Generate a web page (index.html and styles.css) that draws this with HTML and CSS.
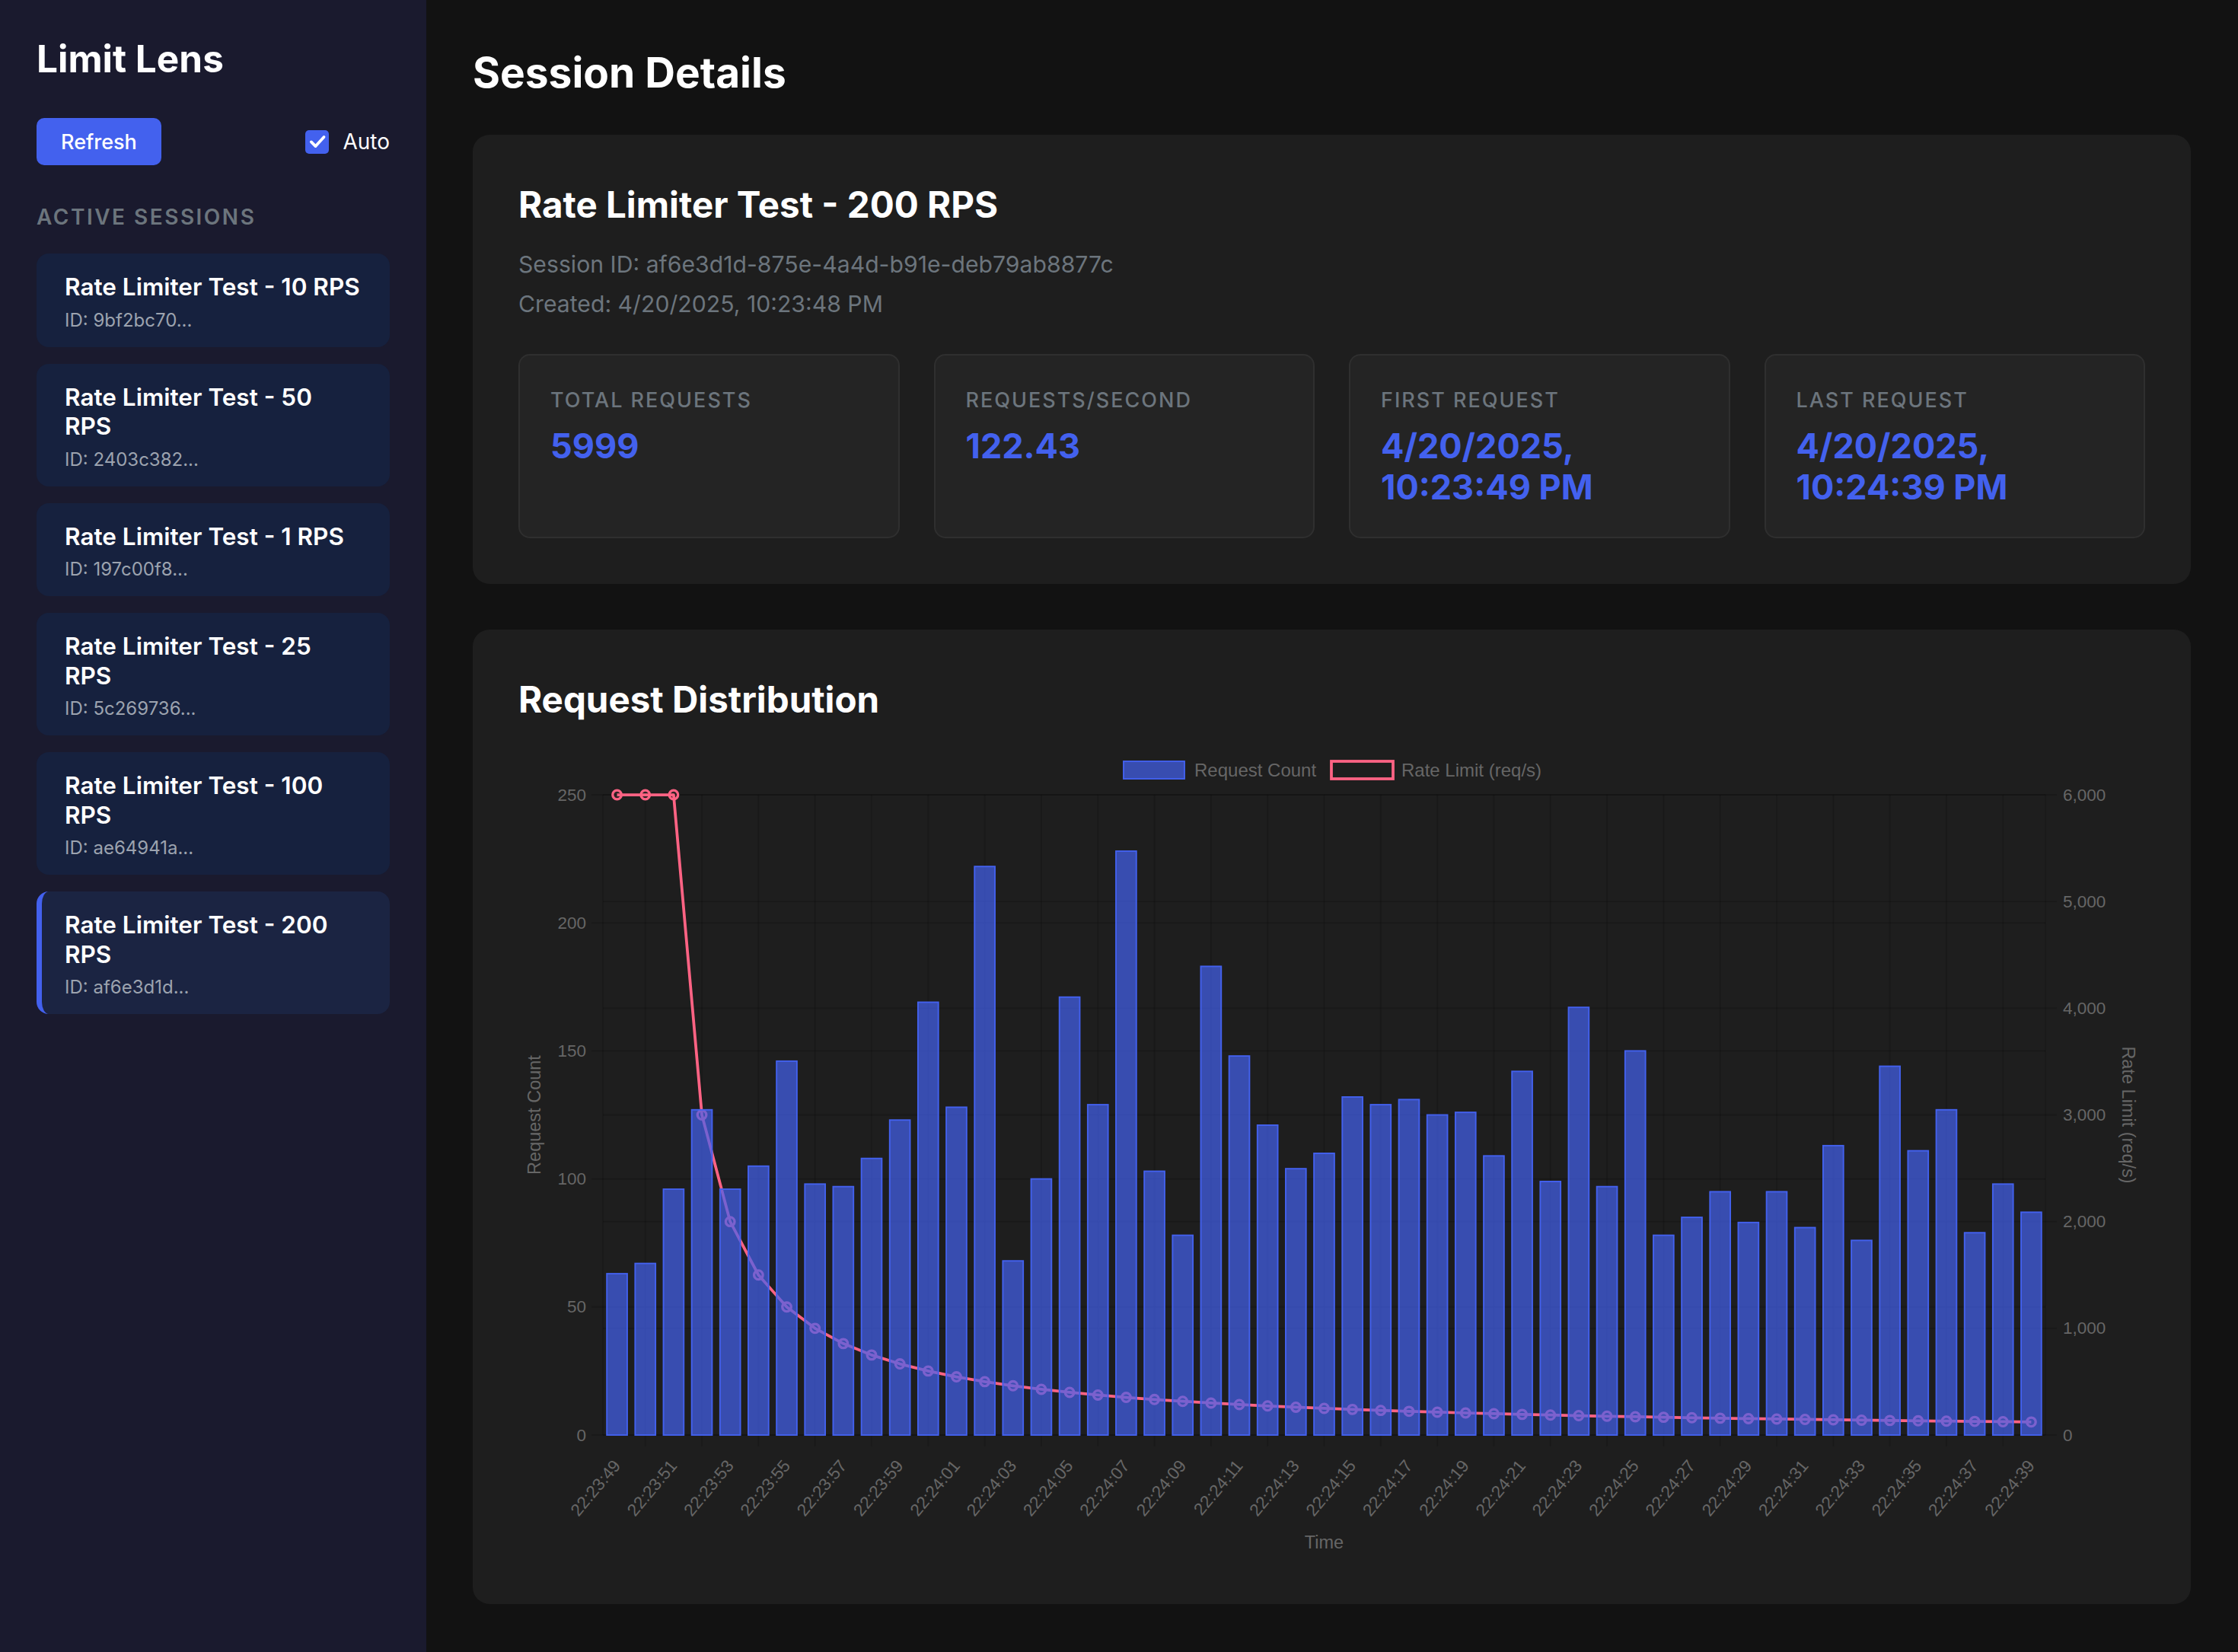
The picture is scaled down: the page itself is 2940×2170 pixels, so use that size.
FILE: index.html
```html
<!DOCTYPE html>
<html lang="en">
<head>
<meta charset="utf-8">
<title>Limit Lens</title>
<link rel="stylesheet" href="styles.css">
</head>
<body>
<div class="app">
  <aside class="sidebar">
    <h1 class="brand">Limit Lens</h1>
    <div class="controls">
      <button class="btn" type="button">Refresh</button>
      <label class="auto">
        <span class="check"><svg viewBox="0 0 32 32" width="26" height="26"><path d="M6 16.5 L13 23.5 L26.5 8.5" fill="none" stroke="#fff" stroke-width="4.6" stroke-linecap="round" stroke-linejoin="round"/></svg></span>
        Auto
      </label>
    </div>
    <h3 class="section-label">Active Sessions</h3>
    <ul class="sessions">
      <li class="session"><div class="session-name">Rate Limiter Test - 10 RPS</div><div class="session-id">ID: 9bf2bc70...</div></li>
      <li class="session"><div class="session-name">Rate Limiter Test - 50 RPS</div><div class="session-id">ID: 2403c382...</div></li>
      <li class="session"><div class="session-name">Rate Limiter Test - 1 RPS</div><div class="session-id">ID: 197c00f8...</div></li>
      <li class="session"><div class="session-name">Rate Limiter Test - 25 RPS</div><div class="session-id">ID: 5c269736...</div></li>
      <li class="session"><div class="session-name">Rate Limiter Test - 100 RPS</div><div class="session-id">ID: ae64941a...</div></li>
      <li class="session active"><div class="session-name">Rate Limiter Test - 200 RPS</div><div class="session-id">ID: af6e3d1d...</div></li>
    </ul>
  </aside>
  <main class="main">
    <h1 class="page-title">Session Details</h1>
    <section class="card">
      <h2 class="card-title">Rate Limiter Test - 200 RPS</h2>
      <p class="meta">Session ID: af6e3d1d-875e-4a4d-b91e-deb79ab8877c</p>
      <p class="meta">Created: 4/20/2025, 10:23:48 PM</p>
      <div class="stats">
        <div class="stat"><div class="stat-label">Total Requests</div><div class="stat-value">5999</div></div>
        <div class="stat"><div class="stat-label">Requests/Second</div><div class="stat-value">122.43</div></div>
        <div class="stat"><div class="stat-label">First Request</div><div class="stat-value">4/20/2025, 10:23:49 PM</div></div>
        <div class="stat"><div class="stat-label">Last Request</div><div class="stat-value">4/20/2025, 10:24:39 PM</div></div>
      </div>
    </section>
    <section class="card chart-card">
      <h2 class="card-title chart-title">Request Distribution</h2>
      <svg id="chart" class="chart" viewBox="0 0 2137 1066" width="2137" height="1066"></svg>
    </section>
  </main>
</div>
<script src="script.js"></script>
</body>
</html>
```

FILE: styles.css
```css
* { box-sizing: border-box; margin: 0; padding: 0; }
html, body { height: 100%; }
body {
  background: #121212;
  color: #ffffff;
  font-family: Inter, "Noto Sans", sans-serif;
}
.app { display: flex; min-height: 100vh; }

.sidebar {
  width: 560px;
  flex: none;
  background: #1a1a2e;
  padding: 48px;
}
.brand { font-size: 49.5px; font-weight: 700; line-height: 58px; }
.controls {
  display: flex;
  align-items: center;
  justify-content: space-between;
  margin-top: 49px;
}
.btn {
  height: 62px;
  padding: 0 32px;
  background: #4361ee;
  color: #fff;
  border: none;
  border-radius: 10px;
  font-family: Inter, sans-serif;
  font-size: 27px;
  font-weight: 500;
}
.auto { display: flex; align-items: center; gap: 18px; font-size: 28px; }
.check {
  width: 31px; height: 31px;
  border-radius: 5px;
  background: #4361ee;
  display: flex; align-items: center; justify-content: center;
}
.section-label {
  margin-top: 52px;
  font-size: 28px;
  font-weight: 600;
  letter-spacing: 2.5px;
  text-transform: uppercase;
  color: #6c757d;
  line-height: 33px;
}
.sessions {
  list-style: none;
  margin-top: 31px;
  display: flex;
  flex-direction: column;
  gap: 22px;
}
.session {
  background: #16213e;
  border-radius: 16px;
  border-left: 7px solid transparent;
  padding: 25px 30px 21px;
}
.session.active { border-left-color: #4361ee; background: #1b2442; }
.session-name { font-size: 31.5px; font-weight: 600; line-height: 38.5px; max-width: 390.5px; }
.session-id { font-size: 24px; color: #9ca3af; margin-top: 9px; line-height: 29px; }

.main { flex: 1; min-width: 0; padding: 62px 62px 62px 61px; }
.page-title { font-size: 55px; font-weight: 700; line-height: 67px; margin-bottom: 48px; }
.card { background: #1e1e1e; border-radius: 22px; padding: 65px 60px 60px; }
.card + .card { margin-top: 60px; }
.card-title { font-size: 47.5px; font-weight: 700; line-height: 54px; }
.meta { color: #6c757d; font-size: 30.2px; line-height: 45px; margin-top: 7px; }
.card-title + .meta { margin-top: 29px; }
.stats {
  display: grid;
  grid-template-columns: repeat(4, 1fr);
  gap: 45px;
  margin-top: 43px;
}
.stat {
  background: #242424;
  border: 2px solid #2f2f2f;
  border-radius: 15px;
  padding: 43px 40px 38px;
}
.stat-label {
  font-size: 27px;
  font-weight: 500;
  letter-spacing: 2px;
  text-transform: uppercase;
  color: #6c757d;
  line-height: 32px;
}
.stat-value { font-size: 45px; font-weight: 700; color: #4361ee; line-height: 54px; margin-top: 17px; }
.chart-title { margin-bottom: 35px; }
.chart { display: block; width: 2137px; height: 1066px; }
.chart text { font-family: "Liberation Sans", Arial, sans-serif; font-size: 22.5px; fill: #666666; }
.chart .legend-text { font-size: 24px; }
.chart .axis-title { font-size: 23.5px; }
```

FILE: script.js
```js
(function () {
  var NS = 'http://www.w3.org/2000/svg';
  var svg = document.getElementById('chart');
  var L = 111, R = 2006, T = 63, B = 904;
  var counts = [63, 67, 96, 127, 96, 105, 146, 98, 97, 108, 123, 169, 128, 222, 68, 100, 171, 129, 228, 103,
    78, 183, 148, 121, 104, 110, 132, 129, 131, 125, 126, 109, 142, 99, 167, 97, 150, 78, 85, 95,
    83, 95, 81, 113, 76, 144, 111, 127, 79, 98, 87];
  var n = counts.length;
  var cw = (R - L) / n;
  function yL(v) { return B - v * (B - T) / 250; }
  function yR(v) { return B - v * (B - T) / 6000; }
  function cx(i) { return L + (i + 0.5) * cw; }
  function el(tag, attrs, text, parent) {
    var e = document.createElementNS(NS, tag);
    for (var k in attrs) e.setAttribute(k, attrs[k]);
    if (text !== undefined && text !== null) e.textContent = text;
    (parent || svg).appendChild(e);
    return e;
  }
  var gridColor = 'rgba(0,0,0,0.14)';
  var g = el('g', { stroke: gridColor, 'stroke-width': 1.9 });
  var v;
  for (v = 0; v <= 250; v += 50) el('line', { x1: L - 15, x2: R, y1: yL(v), y2: yL(v) }, null, g);
  for (v = 0; v <= 6000; v += 1000) el('line', { x1: L, x2: R + 15, y1: yR(v), y2: yR(v) }, null, g);
  el('line', { x1: L, x2: L, y1: T, y2: B }, null, g);
  el('line', { x1: R, x2: R, y1: T, y2: B }, null, g);
  for (var i = 1; i < n; i += 2) el('line', { x1: cx(i), x2: cx(i), y1: T, y2: B + 15 }, null, g);

  for (v = 0; v <= 250; v += 50) el('text', { x: 89, y: yL(v), 'text-anchor': 'end', 'dominant-baseline': 'central' }, String(v));
  for (v = 0; v <= 6000; v += 1000) el('text', { x: 2029, y: yR(v), 'text-anchor': 'start', 'dominant-baseline': 'central' }, v.toLocaleString('en-US'));

  function pad(x) { return (x < 10 ? '0' : '') + x; }
  for (i = 0; i < n; i += 2) {
    var s = 23 * 60 + 49 + i;
    var label = '22:' + pad(Math.floor(s / 60)) + ':' + pad(s % 60);
    var x = cx(i), y = 940;
    el('text', { x: x, y: y, 'text-anchor': 'end', 'dominant-baseline': 'central', transform: 'rotate(-50 ' + x + ' ' + y + ')' }, label);
  }
  el('text', { x: (L + R) / 2, y: 1053, 'text-anchor': 'middle', 'class': 'axis-title' }, 'Time');
  el('text', { x: 21, y: (T + B) / 2, 'text-anchor': 'middle', 'dominant-baseline': 'central', 'class': 'axis-title', transform: 'rotate(-90 21 ' + (T + B) / 2 + ')' }, 'Request Count');
  el('text', { x: 2115, y: (T + B) / 2, 'text-anchor': 'middle', 'dominant-baseline': 'central', 'class': 'axis-title', transform: 'rotate(90 2115 ' + (T + B) / 2 + ')' }, 'Rate Limit (req/s)');

  var pts = [];
  for (i = 0; i < n; i++) {
    var r = 6000 / Math.max(1, i - 1);
    pts.push([cx(i), yR(r)]);
  }
  el('polyline', { points: pts.map(function (p) { return p[0].toFixed(2) + ',' + p[1].toFixed(2); }).join(' '), fill: 'none', stroke: '#ff6384', 'stroke-width': 3.75, 'stroke-linejoin': 'round' });
  var pg = el('g', { fill: 'rgba(255,99,132,0.08)', stroke: '#ff6384', 'stroke-width': 3.3 });
  pts.forEach(function (p) { el('circle', { cx: p[0], cy: p[1], r: 5.8 }, null, pg); });

  var bw = cw * 0.72;
  var bg = el('g', { fill: 'rgba(67,97,238,0.7)', stroke: '#4361ee', 'stroke-width': 1.9 });
  for (i = 0; i < n; i++) {
    var top = yL(counts[i]);
    el('rect', { x: cx(i) - bw / 2, y: top, width: bw, height: B - top }, null, bg);
  }

  el('rect', { x: 795, y: 19, width: 80, height: 23, fill: 'rgba(67,97,238,0.7)', stroke: '#4361ee', 'stroke-width': 1.9 });
  el('text', { x: 888, y: 30.5, 'dominant-baseline': 'central', 'class': 'legend-text' }, 'Request Count');
  el('rect', { x: 1068, y: 19, width: 81, height: 23, fill: 'none', stroke: '#ff6384', 'stroke-width': 3.75 });
  el('text', { x: 1160, y: 30.5, 'dominant-baseline': 'central', 'class': 'legend-text' }, 'Rate Limit (req/s)');
})();
```
